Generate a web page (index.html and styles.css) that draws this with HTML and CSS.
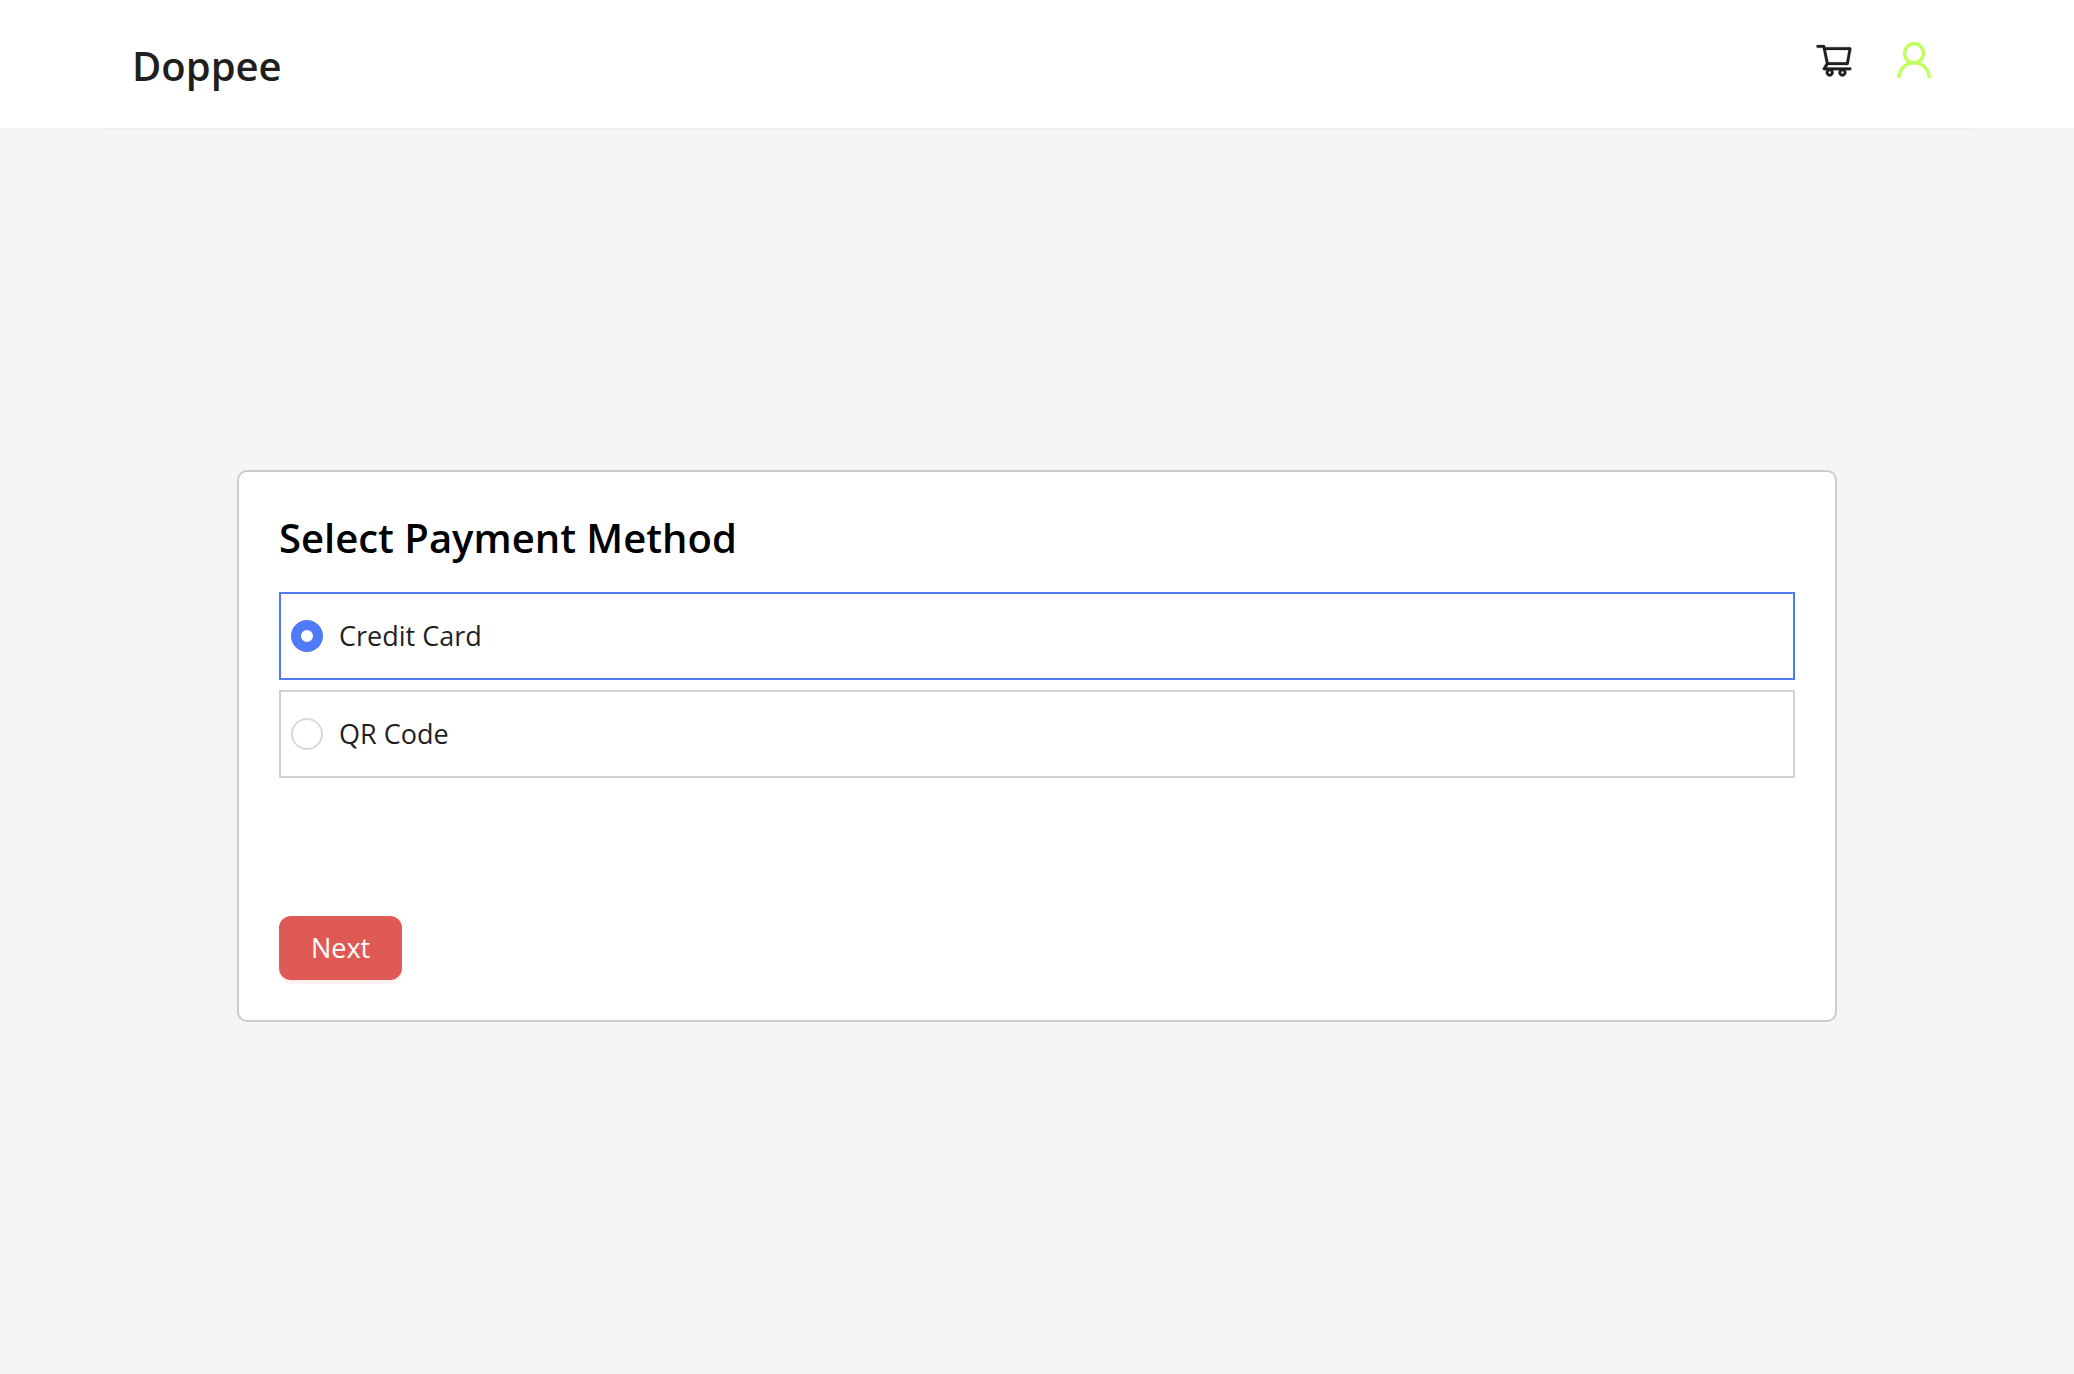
FILE: index.html
```html
<!DOCTYPE html>
<html lang="en">
<head>
<meta charset="utf-8">
<meta name="viewport" content="width=device-width, initial-scale=1">
<title>Doppee</title>
<link rel="stylesheet" href="styles.css">
</head>
<body>
<header class="header">
  <div class="header-inner">
    <a class="brand" href="#">Doppee</a>
    <nav class="actions" aria-label="Account">
      <a class="action" href="#" aria-label="Cart">
        <svg class="icon" viewBox="0 0 1024 1024" fill="currentColor" stroke="currentColor" stroke-width="6" aria-hidden="true"><path d="M922.9 701.9H327.4l29.9-60.9 496.8-.9c16.8 0 31.2-12 34.2-28.6l68.8-385.1c1.8-10.1-.9-20.5-7.5-28.4a34.99 34.99 0 0 0-26.6-12.5l-632-2.1-5.4-25.4c-3.4-16.2-18-28-34.6-28H96.5a35.3 35.3 0 1 0 0 70.6h125.9L246 312.8l58.1 281.3-74.8 122.1a34.96 34.96 0 0 0-3 36.8c6 11.9 18.1 19.4 31.5 19.4h62.8a102.43 102.43 0 0 0-20.6 61.7c0 56.6 46 102.6 102.6 102.6s102.6-46 102.6-102.6c0-22.3-7.4-44-20.6-61.7h161.1a102.43 102.43 0 0 0-20.6 61.7c0 56.6 46 102.6 102.6 102.6s102.6-46 102.6-102.6c0-22.3-7.4-44-20.6-61.7H923c19.4 0 35.3-15.8 35.3-35.3a35.42 35.42 0 0 0-35.4-35.2zM305.7 253l575.8 1.9-56.4 315.8-452.3.8L305.7 253zm96.9 612.7c-17.4 0-31.6-14.2-31.6-31.6s14.2-31.6 31.6-31.6 31.6 14.2 31.6 31.6-14.2 31.6-31.6 31.6zm325.1 0c-17.4 0-31.6-14.2-31.6-31.6s14.2-31.6 31.6-31.6 31.6 14.2 31.6 31.6-14.2 31.6-31.6 31.6z"/></svg>
      </a>
      <a class="action action-user" href="#" aria-label="Profile">
        <svg class="icon" viewBox="0 0 40 40" fill="none" stroke="currentColor" stroke-width="3.4" aria-hidden="true"><circle cx="20" cy="13.3" r="9.5"/><path d="M4.7 38a15.3 15.3 0 0 1 30.6 0"/></svg>
      </a>
    </nav>
  </div>
</header>
<main class="main">
  <form class="card">
    <h1 class="title">Select Payment Method</h1>
    <div class="options">
      <label class="option"><input class="radio" type="radio" name="method" value="card" checked><span>Credit Card</span></label>
      <label class="option"><input class="radio" type="radio" name="method" value="qr"><span>QR Code</span></label>
    </div>
    <button class="next" type="button">Next</button>
  </form>
</main>
</body>
</html>
```
FILE: styles.css
```css
* {
  box-sizing: border-box;
}

body {
  margin: 0;
  min-height: 100vh;
  display: flex;
  flex-direction: column;
  background: #f5f5f5;
  color: #1f1f1f;
  font: 27px/44px "Segoe UI", "Open Sans", "Noto Sans", sans-serif;
}

.header {
  background: linear-gradient(#fff, #fff) no-repeat 0 0 / 100% 128px;
  padding: 0 100px;
}

.header-inner {
  display: flex;
  justify-content: space-between;
  align-items: flex-start;
  height: 130px;
  padding: 40px 40px 0 32px;
  border-bottom: 2px solid #f0f0f0;
}

.brand {
  color: inherit;
  font-size: 40px;
  line-height: 52px;
  font-weight: 600;
  text-decoration: none;
}

.actions {
  display: flex;
  gap: 40px;
}

.action {
  color: #1f1f1f;
}

.action-user {
  color: #bfff60;
}

.icon {
  display: block;
  width: 40px;
  height: 40px;
}

.main {
  flex: 1;
  display: flex;
  align-items: center;
  justify-content: center;
  padding: 0 40px 12px;
}

.card {
  width: 100%;
  max-width: 1600px;
  padding: 40px;
  background: #fff;
  border: 2px solid #ccc;
  border-radius: 10px;
}

.title {
  margin: 0 0 28px;
  color: #000;
  font-size: 40px;
  line-height: 52px;
  font-weight: 600;
}

.options {
  display: grid;
  gap: 10px;
  margin-bottom: 138px;
}

.option {
  display: flex;
  align-items: center;
  gap: 16px;
  height: 88px;
  padding: 0 10px;
  border: 2px solid #d0d0d0;
}

.option:has(:checked) {
  border-color: #4f7af8;
}

.radio {
  appearance: none;
  width: 32px;
  height: 32px;
  margin: 0;
  border: 2px solid #d9d9d9;
  border-radius: 50%;
  background: #fff;
}

.radio:checked {
  border: 10px solid #4f7af8;
}

.next {
  display: block;
  height: 64px;
  padding: 0 32px;
  border: 0;
  border-radius: 12px;
  background: #e05a55;
  box-shadow: 0 4px 0 rgba(255, 38, 5, 0.06);
  color: #fff;
  font: inherit;
}
```
